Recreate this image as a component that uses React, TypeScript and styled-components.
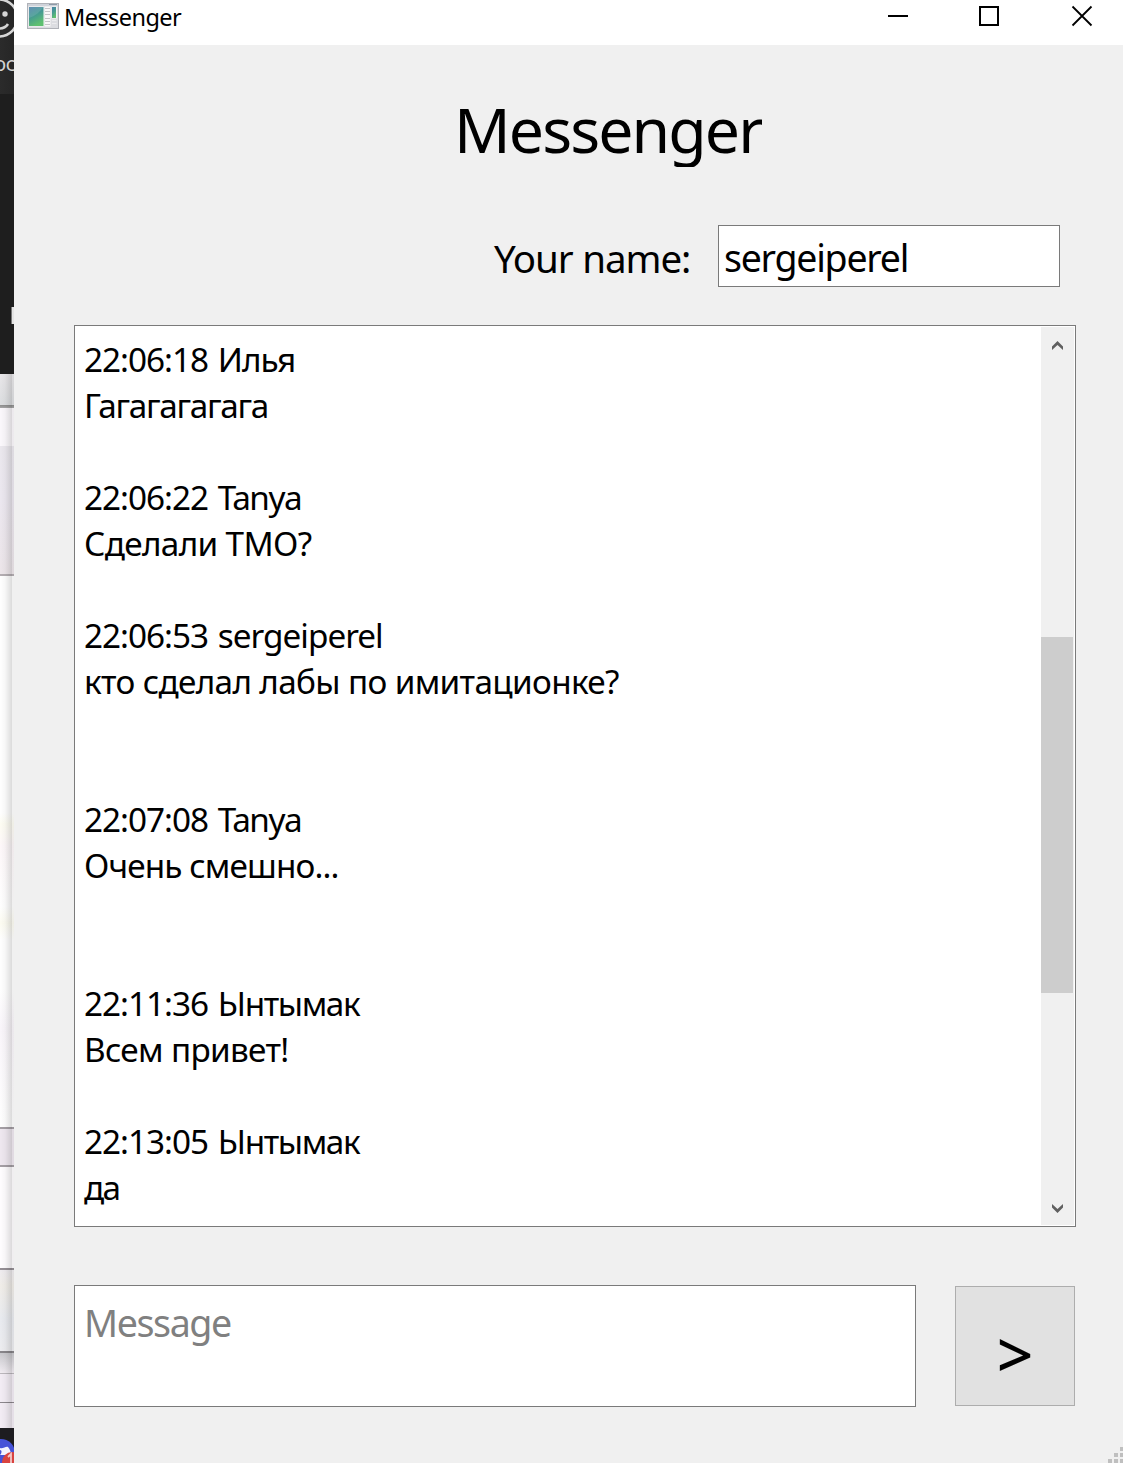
import React from "react";
import styled, { createGlobalStyle } from "styled-components";

const GlobalStyle = createGlobalStyle`
  * { box-sizing: border-box; }
  body {
    margin: 0;
    background: #f0f0f0;
    color: #000;
    font-family: "Noto Sans", "Segoe UI", sans-serif;
  }
`;

const Screen = styled.div`
  display: flex;
  width: 1123px;
  height: 1463px;
  overflow: hidden;
`;

/* Sliver of the desktop visible to the left of the window */
const Backdrop = styled.div`
  position: relative;
  display: flex;
  flex-direction: column;
  width: 14px;
  flex: none;
  overflow: hidden;
`;

const Band = styled.div<{ $h: number; $fill: string }>`
  flex: none;
  height: ${(p) => p.$h}px;
  background: ${(p) => p.$fill};
  overflow: hidden;
`;

const BandDrawing = styled.svg`
  display: block;
`;

const BandCaption = styled.div`
  display: flex;
  justify-content: flex-end;
  height: 30px;
  margin: 5px -1px 0 0;
  line-height: 30px;
  font-size: 20px;
  letter-spacing: -0.5px;
  color: #d2d2d2;
`;

const Caret = styled.div`
  width: 3px;
  height: 17px;
  margin: 213px 0 0 11px;
  background: #e4e4e4;
  border-left: 1px solid #777;
`;

const EdgeShadow = styled.div`
  position: absolute;
  inset: 374px 0 35px 0;
  background: linear-gradient(
    to right,
    transparent 0,
    rgba(0, 0, 0, 0.03) 5px,
    rgba(0, 0, 0, 0.14) 12px,
    rgba(0, 0, 0, 0.06) 12px
  );
`;

const Window = styled.div`
  position: relative;
  display: flex;
  flex-direction: column;
  flex: 1;
  min-width: 0;
  background: #f0f0f0;
`;

const TitleBar = styled.header`
  display: flex;
  align-items: flex-start;
  height: 45px;
  flex: none;
  background: #fff;
  padding-left: 13px;
`;

const WindowTitle = styled.span`
  flex: 1;
  margin-left: 5px;
  font-size: 23.5px;
  line-height: 35px;
  letter-spacing: -0.57px;
`;

const AppIcon = styled.svg`
  display: block;
  margin-top: 3px;
`;

const Controls = styled.div`
  display: flex;
  gap: 71px;
  padding: 5px 30px 0 0;
`;

const CloseGlyph = styled.svg`
  margin-left: 1px;
`;

const Content = styled.main`
  display: flex;
  flex-direction: column;
  padding: 39px 47px 0 60px;
`;

const Heading = styled.h1`
  align-self: flex-start;
  margin: 0 0 0 380px;
  height: 83px;
  overflow: hidden;
  font-size: 62.5px;
  font-weight: 400;
  line-height: 89px;
  letter-spacing: -1.9px;
`;

const NameRow = styled.div`
  display: flex;
  justify-content: flex-end;
  margin: 58px 16px 38px 0;
  font-size: 38.5px;
`;

const NameLabel = styled.label`
  width: 224px;
  line-height: 66px;
  height: 62px;
  letter-spacing: -1.1px;
  word-spacing: 1px;
`;

const NameField = styled.div`
  width: 342px;
  height: 62px;
  padding-left: 5px;
  border: 1px solid #7a7a7a;
  background: #fff;
  font-size: 37.5px;
  line-height: 63px;
  letter-spacing: -1.25px;
`;

const History = styled.section`
  display: flex;
  height: 902px;
  border: 1px solid #7a7a7a;
  background: #fff;
  padding: 1px 1px 1px 9px;
`;

const Lines = styled.div`
  flex: 1;
  padding-top: 9px;
  font-size: 33.3px;
`;

const Line = styled.div<{ $track?: number }>`
  height: 46px;
  line-height: 46px;
  white-space: pre;
  letter-spacing: ${(p) => p.$track ?? 0}px;
`;

const Time = styled.span`
  letter-spacing: -1px;
  word-spacing: 2px;
`;

const ScrollBar = styled.div`
  display: flex;
  flex-direction: column;
  justify-content: space-between;
  align-items: center;
  width: 33px;
  padding: 14px 0 12px;
  background: #f0f0f0;
`;

const Thumb = styled.div`
  width: 32px;
  height: 356px;
  align-self: flex-start;
  margin-top: 76px;
  background: #cdcdcd;
`;

const Composer = styled.div`
  display: flex;
  justify-content: space-between;
  margin-top: 58px;
`;

const MessageField = styled.div`
  width: 842px;
  height: 122px;
  padding: 11px 9px;
  border: 1px solid #7a7a7a;
  background: #fff;
  color: #808080;
  font-size: 37.6px;
  line-height: 51px;
  letter-spacing: -1.4px;
`;

const SendButton = styled.button`
  width: 120px;
  height: 120px;
  margin: 1px 1px 0 0;
  padding: 16px 0 0;
  border: 1px solid #adadad;
  background: #e1e1e1;
  color: #000;
  font: 500 64px/100px "Noto Sans", sans-serif;
`;

const SizeGrip = styled.svg`
  position: absolute;
  right: 0;
  bottom: 0;
`;

type Entry =
  | { kind: "head"; time: string; name: string; track: number }
  | { kind: "text"; text: string; track: number }
  | { kind: "gap" };

const gap: Entry = { kind: "gap" };

const entries: Entry[] = [
  { kind: "head", time: "22:06:18", name: "Илья", track: -1 },
  { kind: "text", text: "Гагагагагага", track: -1.3 },
  gap,
  { kind: "head", time: "22:06:22", name: "Tanya", track: -1.5 },
  { kind: "text", text: "Сделали ТМО?", track: -0.65 },
  gap,
  { kind: "head", time: "22:06:53", name: "sergeiperel", track: -0.98 },
  { kind: "text", text: "кто сделал лабы по имитационке?", track: -0.65 },
  gap,
  gap,
  { kind: "head", time: "22:07:08", name: "Tanya", track: -1.5 },
  { kind: "text", text: "Очень смешно...", track: -0.87 },
  gap,
  gap,
  { kind: "head", time: "22:11:36", name: "Ынтымак", track: -1.4 },
  { kind: "text", text: "Всем привет!", track: -0.68 },
  gap,
  { kind: "head", time: "22:13:05", name: "Ынтымак", track: -1.4 },
  { kind: "text", text: "да", track: -1.8 },
];

function Desktop() {
  return (
    <Backdrop>
      <Band $h={94} $fill="linear-gradient(to right, #2b2b2b, #262626)">
        <BandDrawing width="14" height="44" viewBox="0 0 14 44" fill="none">
          <circle cx="-1" cy="18" r="18.5" stroke="#d6d6d6" strokeWidth="2.6" />
          <circle cx="5" cy="14" r="2.7" fill="#d6d6d6" />
          <path d="M-9 24C-5 30 4 30 8 24" stroke="#d6d6d6" strokeWidth="2.6" />
        </BandDrawing>
        <BandCaption>ос</BandCaption>
      </Band>
      <Band $h={280} $fill="#1e1e1e">
        <Caret />
      </Band>
      <Band $h={31} $fill="linear-gradient(#e9e7ea, #dcdee0)" />
      <Band $h={3} $fill="linear-gradient(#8c8c8c, #a8a8a8)" />
      <Band $h={38} $fill="#fbf8fc" />
      <Band $h={128} $fill="linear-gradient(#ebe8ee, #ece8f0 40%, #ede6ea)" />
      <Band $h={2} $fill="#b4aeb2" />
      <Band
        $h={551}
        $fill="linear-gradient(#fff 0 43%, #fefdf3 45%, #fef8fa 49%, #fff 60%, #fdfcf2 63%, #fff 66%, #fff 75%, #faf6fb 82%, #fff)"
      />
      <Band $h={2} $fill="#a59fa5" />
      <Band $h={36} $fill="#efe8f0" />
      <Band $h={2} $fill="#a59fa5" />
      <Band $h={101} $fill="#fffdff" />
      <Band $h={2} $fill="#958f95" />
      <Band $h={81} $fill="linear-gradient(#efecf0, #f1eee9 20%, #e9ebf0 60%, #ededf0)" />
      <Band $h={2} $fill="#88868a" />
      <Band $h={20} $fill="linear-gradient(#c9c9cd, #f2edf3)" />
      <Band $h={1} $fill="#bcb8bd" />
      <Band $h={28} $fill="#f3edf5" />
      <Band $h={1} $fill="#8c878d" />
      <Band $h={25} $fill="#f3edf5" />
      <Band $h={35} $fill="#1d1c20">
        <BandDrawing width="14" height="35" viewBox="0 0 14 35">
          <circle cx="1" cy="25" r="14" fill="#4653d8" />
          <path d="M0 20C3 21 6 18 8 19C10 21 11 24 11 27L0 27C2 25 2 22 0 22Z" fill="#f2f3ff" />
          <circle cx="12" cy="34" r="10" fill="#d9433f" />
          <path d="M8 29L11 26V36" fill="none" stroke="#f0c8c8" strokeWidth="1.8" />
        </BandDrawing>
      </Band>
      <EdgeShadow />
    </Backdrop>
  );
}

function ProgramIcon() {
  return (
    <AppIcon width="32" height="26" viewBox="0 0 32 26">
      <defs>
        <linearGradient id="pane" x1="0" y1="0" x2="0.4" y2="1">
          <stop offset="0" stopColor="#4a7fa8" />
          <stop offset="0.5" stopColor="#459a92" />
          <stop offset="1" stopColor="#5fc070" />
        </linearGradient>
      </defs>
      <rect x="0.5" y="0.5" width="31" height="25" fill="#dcdde1" stroke="#b0b2b8" />
      <rect x="1" y="1" width="30" height="2" fill="#cfd3da" />
      <rect x="22" y="1" width="8" height="1" fill="#8d9aa8" />
      <rect x="1.5" y="3.5" width="16" height="20" fill="#f4f6f6" />
      <rect x="2" y="4" width="14.5" height="19" fill="url(#pane)" />
      <path d="M2 15C8 13 13 9 16.5 4H2Z" fill="#fff" opacity="0.12" />
      <rect x="18" y="3.5" width="5.5" height="20" fill="#f8f8f8" />
      <path d="M18 5.5H23M18 8.5H23M18 11.5H23M18 15.5H23M18 18.5H23M18 21.5H23" stroke="#c5c5c8" />
      <rect x="24.5" y="3.5" width="5.5" height="12" fill="#f4f6f6" />
      <rect x="25" y="4" width="4" height="11" fill="url(#pane)" />
      <path d="M25 17.5H29.5M25 20.5H29.5" stroke="#ececee" />
    </AppIcon>
  );
}

export default function App() {
  return (
    <Screen>
      <GlobalStyle />
      <Desktop />
      <Window>
        <TitleBar>
          <ProgramIcon />
          <WindowTitle>Messenger</WindowTitle>
          <Controls>
            <svg width="20" height="22" viewBox="0 0 20 22">
              <rect x="0" y="10" width="20" height="2" />
            </svg>
            <svg width="20" height="22" viewBox="0 0 20 22" fill="none">
              <rect x="1" y="2" width="18" height="18" stroke="#000" strokeWidth="2" />
            </svg>
            <CloseGlyph width="22" height="22" viewBox="0 0 22 22" fill="none">
              <path d="M1.5 1.5L20.5 20.5M20.5 1.5L1.5 20.5" stroke="#000" strokeWidth="1.8" />
            </CloseGlyph>
          </Controls>
        </TitleBar>
        <Content>
          <Heading>Messenger</Heading>
          <NameRow>
            <NameLabel>Your name:</NameLabel>
            <NameField>sergeiperel</NameField>
          </NameRow>
          <History>
            <Lines>
              {entries.map((e, i) =>
                e.kind === "gap" ? (
                  <Line key={i} />
                ) : e.kind === "head" ? (
                  <Line key={i} $track={e.track}>
                    <Time>{e.time} </Time>
                    {e.name}
                  </Line>
                ) : (
                  <Line key={i} $track={e.track}>
                    {e.text}
                  </Line>
                )
              )}
            </Lines>
            <ScrollBar>
              <svg width="11" height="9" viewBox="0 0 11 9">
                <path d="M5.5 0L11 5.5V9L5.5 4L0 9V5.5Z" fill="#606060" />
              </svg>
              <Thumb />
              <svg width="11" height="9" viewBox="0 0 11 9">
                <path d="M5.5 9L11 3.5V0L5.5 5L0 0V3.5Z" fill="#606060" />
              </svg>
            </ScrollBar>
          </History>
          <Composer>
            <MessageField>Message</MessageField>
            <SendButton>&gt;</SendButton>
          </Composer>
        </Content>
        <SizeGrip width="15" height="16" viewBox="0 0 15 16" fill="#bfbfbf">
          <path d="M12 0h4v4h-4zM6 6h4v4h-4zM12 6h4v4h-4zM0 12h4v4h-4zM6 12h4v4h-4zM12 12h4v4h-4z" />
        </SizeGrip>
      </Window>
    </Screen>
  );
}
